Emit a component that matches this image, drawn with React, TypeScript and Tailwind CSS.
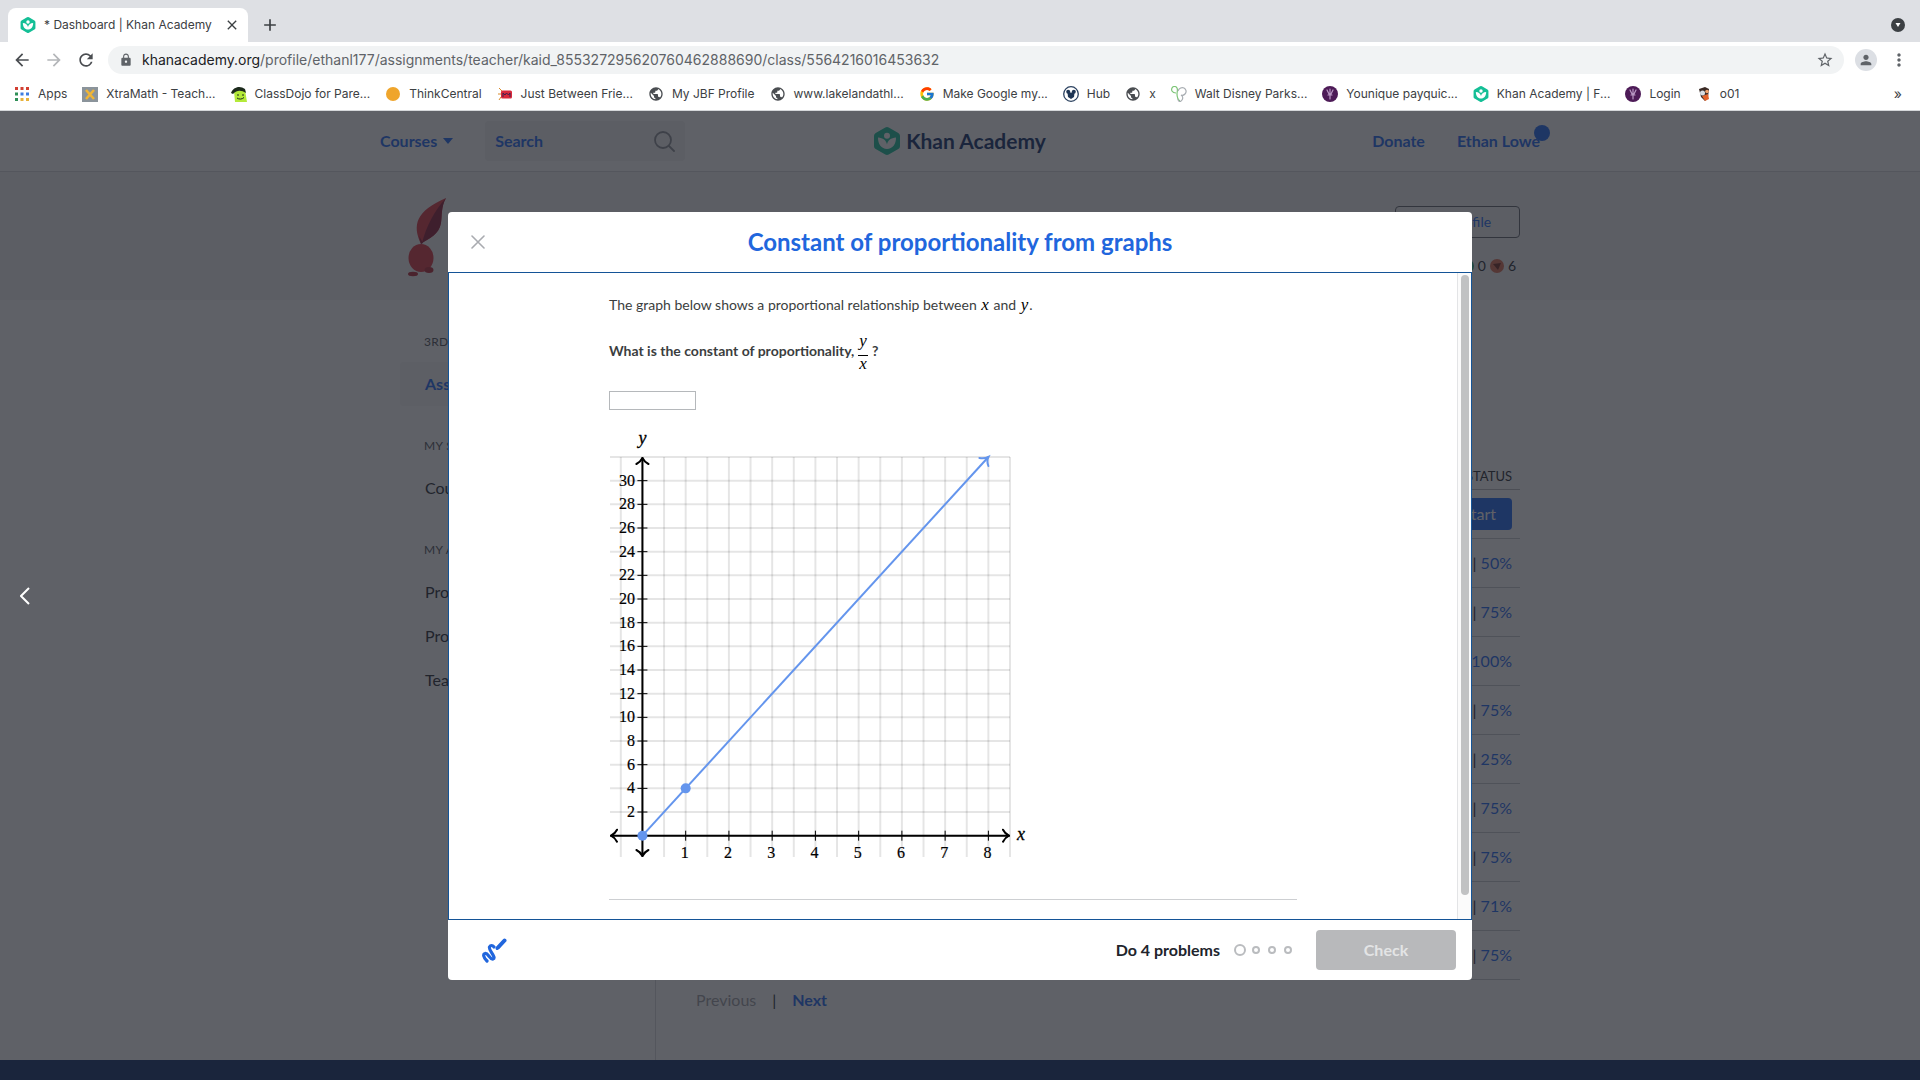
import type { ReactNode } from 'react';
import {
  MdAdd,
  MdArrowBack,
  MdArrowForward,
  MdClose,
  MdLock,
  MdMoreVert,
  MdPerson,
  MdPublic,
  MdRefresh,
  MdStarBorder,
} from 'react-icons/md';
import { FcGoogle } from 'react-icons/fc';

function KhanIcon({ className }: { className: string }) {
  return (
    <svg viewBox="0 0 26 28" className={className} aria-hidden="true">
      <path
        d="M11.3.5a3.4 3.4 0 0 1 3.4 0l9.6 5.5A3.4 3.4 0 0 1 26 9v10a3.4 3.4 0 0 1-1.700 3l-9.6 5.500a3.4 3.4 0 0 1-3.4 0L1.700 22A3.4 3.4 0 0 1 0 19V9a3.4 3.4 0 0 1 1.700-3z"
        fill="#14bf96"
      />
      <circle cx="13" cy="8.800" r="3" fill="#fff" />
      <path d="M4 10.500c5 .3 8.300 3 9 7 .7-4 4-6.700 9-7 .2 6.500-3.500 11.500-9 11.500s-9.200-5-9-11.500z" fill="#fff" />
    </svg>
  );
}

function AppsIcon() {
  const colors = ['#d23f31', '#d23f31', '#d23f31', '#2f8f57', '#3f7de0', '#3f7de0', '#2f8f57', '#e8b23a', '#e8b23a'];
  return (
    <svg viewBox="0 0 16 16" className="size-4">
      {colors.map((fill, i) => (
        <rect key={i} x={1 + (i % 3) * 5.5} y={1 + Math.floor(i / 3) * 5.5} width="3" height="3" fill={fill} />
      ))}
    </svg>
  );
}

function XtraMathIcon() {
  return (
    <svg viewBox="0 0 16 16" className="size-4">
      <rect y="1" width="16" height="15" fill="#8b949b" />
      <path d="M4 4l8 9M12 4l-8 9" stroke="#f0b535" strokeWidth="2.600" />
    </svg>
  );
}

function DojoIcon() {
  return (
    <svg viewBox="0 0 16 16" className="size-4">
      <path d="M3 5l11-1 2 12H4z" fill="#b4ea3a" />
      <path d="M0 7C2 1 9-1 14 3l1 4C10 4 6 4 2 8z" fill="#1c2a1c" />
      <path d="M6 9h2M11 9h2M6 12c2 1.500 5 1.500 7-.5" stroke="#1c2a1c" fill="none" />
    </svg>
  );
}

function DotIcon() {
  return (
    <svg viewBox="0 0 16 16" className="size-4">
      <circle cx="8" cy="8" r="7" fill="#efa52c" />
    </svg>
  );
}

function JbfIcon() {
  return (
    <svg viewBox="0 0 16 16" className="size-4">
      <path d="M2 2l3 3M1 8h3M2 14l2-3" stroke="#d98a2b" />
      <rect x="4" y="4.500" width="11" height="8" rx="1.500" fill="#d8293c" />
      <path d="M6 11V7l2 2 1.500-2 2 2 1.500-2v4" stroke="#3b2350" fill="none" />
    </svg>
  );
}

function GlobeIcon() {
  return (
    <span className="flex size-4 items-center justify-center">
      <MdPublic className="size-4 text-[#4a4d51]" />
    </span>
  );
}

function HubIcon() {
  return (
    <svg viewBox="0 0 16 16" className="size-4">
      <circle cx="8" cy="8" r="7.300" fill="#fff" stroke="#2c4260" strokeWidth="1.300" />
      <circle cx="5.200" cy="5.800" r="2" fill="#1e3554" />
      <circle cx="10.800" cy="5.800" r="2" fill="#1e3554" />
      <path d="M4.500 6.500h7L11 11l-3 2-3-2z" fill="#1e3554" />
    </svg>
  );
}

function DisneyIcon() {
  return (
    <svg viewBox="0 0 16 16" className="size-4" fill="none" strokeWidth="1.200">
      <path d="M5 7C1 7 0 4 1 2s4-2 5 0 0 4 0 6 0 5 3 7" stroke="#7cc576" />
      <path d="M7 5c1-3 4-4 6-3s3 4 1 6-4 1-4 1 3 2 1 5-4 1-4-1" stroke="#a8adb2" />
    </svg>
  );
}

function YouniqueIcon() {
  return (
    <svg viewBox="0 0 16 16" className="size-4">
      <circle cx="8" cy="8" r="8" fill="#4d1b57" />
      <path d="M5 4l2 4M8 3v5M11 4L9 8M6 9h4M8 9v4" stroke="#b998c4" strokeWidth="1.200" strokeLinecap="round" />
    </svg>
  );
}

function OwlIcon() {
  return (
    <svg viewBox="0 0 16 16" className="size-4">
      <path d="M3 3l6-2 4 2-1 8-3 4-4-4z" fill="#3a2a25" />
      <path d="M6 10l6-2 1 5-4 2z" fill="#e2622a" />
      <circle cx="6.500" cy="7" r="2.500" fill="#d7dde2" />
      <circle cx="11" cy="5.500" r="1.800" fill="#f0a26d" />
    </svg>
  );
}

const bookmarks: { label: string; icon: ReactNode }[] = [
  { label: 'Apps', icon: <AppsIcon /> },
  { label: 'XtraMath - Teach...', icon: <XtraMathIcon /> },
  { label: 'ClassDojo for Pare...', icon: <DojoIcon /> },
  { label: 'ThinkCentral', icon: <DotIcon /> },
  { label: 'Just Between Frie...', icon: <JbfIcon /> },
  { label: 'My JBF Profile', icon: <GlobeIcon /> },
  { label: 'www.lakelandathl...', icon: <GlobeIcon /> },
  { label: 'Make Google my...', icon: <FcGoogle className="size-4" /> },
  { label: 'Hub', icon: <HubIcon /> },
  { label: 'x', icon: <GlobeIcon /> },
  { label: 'Walt Disney Parks...', icon: <DisneyIcon /> },
  { label: 'Younique payquic...', icon: <YouniqueIcon /> },
  { label: 'Khan Academy | F...', icon: <KhanIcon className="size-4" /> },
  { label: 'Login', icon: <YouniqueIcon /> },
  { label: 'o01', icon: <OwlIcon /> },
];

function BrowserChrome() {
  return (
    <div className="border-b border-[#d5d7da] bg-white font-['Inter',sans-serif] text-[#3c4043]">
      <div className="flex h-[42px] items-end bg-[#dee0e4] pl-2 pr-[15px]">
        <div className="flex h-[34px] w-60 items-center rounded-t-lg bg-white pl-3 pr-2">
          <KhanIcon className="size-4" />
          <span className="ml-2 flex-1 whitespace-nowrap text-xs">* Dashboard | Khan Academy</span>
          <button aria-label="Close tab">
            <MdClose className="size-4" />
          </button>
        </div>
        <button aria-label="New tab" className="ml-3 flex h-[34px] items-center">
          <MdAdd className="size-5" />
        </button>
        <button aria-label="Search tabs" className="ml-auto flex h-[34px] items-center">
          <svg viewBox="0 0 14 14" className="size-3.5">
            <circle cx="7" cy="7" r="7" fill="#3c4043" />
            <path d="M4.500 5h5L7 9z" fill="#fff" />
          </svg>
        </button>
      </div>
      <div className="flex h-9 items-center pl-3 pr-[11px] text-[#5f6368]">
        <button aria-label="Back">
          <MdArrowBack className="size-5 text-[#4a4d51]" />
        </button>
        <button aria-label="Forward" className="ml-3">
          <MdArrowForward className="size-5 text-[#b4b6b9]" />
        </button>
        <button aria-label="Reload" className="ml-3">
          <MdRefresh className="size-5 text-[#4a4d51]" />
        </button>
        <div className="ml-3 flex h-7 flex-1 items-center rounded-full bg-[#f1f3f4] pl-[11px] pr-2.5">
          <MdLock className="size-3.5" />
          <p className="ml-[9px] flex-1 whitespace-nowrap text-sm">
            <span className="text-[#202124]">khanacademy.org</span>
            /profile/ethanl177/assignments/teacher/kaid_855327295620760462888690/class/5564216016453632
          </p>
          <button aria-label="Bookmark this page">
            <MdStarBorder className="size-[18px]" />
          </button>
        </div>
        <button aria-label="Account" className="ml-[11px] flex size-[22px] items-center justify-center rounded-full bg-[#dcdfe4]">
          <MdPerson className="size-4" />
        </button>
        <button aria-label="Menu" className="ml-3">
          <MdMoreVert className="size-5" />
        </button>
      </div>
      <nav className="flex h-8 items-center gap-[15px] pl-3.5 pr-[18px] text-xs">
        {bookmarks.map(({ label, icon }) => (
          <a key={label} href="#" className="flex shrink-0 items-center gap-2 whitespace-nowrap">
            {icon}
            {label}
          </a>
        ))}
        <span className="ml-auto text-sm">»</span>
      </nav>
    </div>
  );
}

function SiteHeader() {
  return (
    <header className="border-b border-[#d6d8da]">
      <div className="mx-auto grid h-[60px] max-w-[1160px] grid-cols-3 items-center font-bold text-[#1865f2]">
        <div className="flex items-center">
          <button className="flex items-center gap-1.5">
            Courses
            <svg viewBox="0 0 10 6" className="h-1.5 w-2.5">
              <path d="M0 0h10L5 6z" fill="currentColor" />
            </svg>
          </button>
          <div className="ml-8 flex h-10 w-[200px] items-center rounded bg-[#f3f3f3] px-2.5">
            <input
              type="search"
              aria-label="Search"
              placeholder="Search"
              className="min-w-0 flex-1 bg-transparent placeholder:text-[#1865f2]"
            />
            <svg viewBox="0 0 22 22" className="size-[22px]" fill="none" stroke="#8a8d93" strokeWidth="1.800">
              <circle cx="10" cy="10" r="8" />
              <path d="M16 16l5 5" strokeLinecap="round" />
            </svg>
          </div>
        </div>
        <a href="#" className="flex items-center justify-center gap-1.5 text-[21px] text-[#0a2a66]">
          <KhanIcon className="h-7 w-[26px]" />
          Khan Academy
        </a>
        <div className="flex items-center justify-end gap-8">
          <a href="#">Donate</a>
          <a href="#" className="relative">
            Ethan Lowe
            <span className="absolute -right-2.5 -top-1 size-4 rounded-full bg-[#1865f2]" />
          </a>
        </div>
      </div>
    </header>
  );
}

function ProfileBanner() {
  return (
    <section className="bg-[#f4f4f5]">
      <div className="mx-auto flex h-32 max-w-[1120px] justify-between">
        <svg viewBox="0 0 60 90" className="ml-1 mt-[19px] h-[90px] w-[60px]">
          <path d="M17 53C8 34 12 20 42 7c-5 9-4 17-5 25-2 12-12 15-20 21z" fill="#d92f3c" />
          <path d="M18 52C22 36 30 20 42 7c-5 9-4 17-5 25-2 12-12 15-19 20z" fill="#8a1430" />
          <ellipse cx="17" cy="67" rx="12.500" ry="14" fill="#d92f3c" />
          <path d="M17 53l-2-8 4 7z" fill="#8a1430" />
          <ellipse cx="9" cy="83" rx="5" ry="2.200" fill="#b5202f" />
          <ellipse cx="25" cy="79" rx="4.500" ry="3" fill="#b5202f" />
        </svg>
        <div className="flex flex-col items-end pt-[34px]">
          <button className="h-8 w-[125px] rounded border border-[#5d6068] text-sm text-[#1865f2]">Edit Profile</button>
          <div className="mt-[18px] flex items-center gap-1 pr-1 text-sm leading-5">
            <span className="size-3.5 rounded-full border-2 border-[#1fa37c]" />
            0
            <svg viewBox="0 0 14 14" className="size-3.5">
              <circle cx="7" cy="7" r="7" fill="#d9694e" />
              <path d="M3 5l8-1-3 7z" fill="#6d2118" />
            </svg>
            6
          </div>
        </div>
      </div>
    </section>
  );
}

function NavHeading({ children }: { children: string }) {
  return <h2 className="pl-6 text-xs leading-5 tracking-wide text-[#4b4e55]">{children}</h2>;
}

function NavItem({ children, active = false }: { children: string; active?: boolean }) {
  return (
    <a
      href="#"
      className={
        active
          ? 'flex h-11 items-center rounded bg-[#f6f6f6] pl-[25px] font-bold text-[#1865f2]'
          : 'flex h-11 items-center pl-[25px]'
      }
    >
      {children}
    </a>
  );
}

function Sidebar() {
  return (
    <nav className="w-64 shrink-0 border-r border-[#d6d8da] pt-8">
      <NavHeading>3RD</NavHeading>
      <div className="mb-[30px] mt-2.5">
        <NavItem active>Assignments</NavItem>
      </div>
      <NavHeading>MY STUFF</NavHeading>
      <div className="mb-[30px] mt-2.5">
        <NavItem>Courses</NavItem>
      </div>
      <NavHeading>MY ACCOUNT</NavHeading>
      <div className="mt-2.5">
        <NavItem>Progress</NavItem>
        <NavItem>Profile</NavItem>
        <NavItem>Teachers</NavItem>
      </div>
    </nav>
  );
}

const scores = ['50%', '75%', '100%', '75%', '25%', '75%', '75%', '71%', '75%'];

function Assignments() {
  return (
    <main className="flex-1 pl-10 pt-[161px]">
      <table className="w-full text-right">
        <thead>
          <tr className="h-7 border-b border-[#b9bbbf] text-[13px]">
            <th className="pr-2 pt-1 font-normal">STATUS</th>
          </tr>
        </thead>
        <tbody>
          <tr className="h-[49px] border-b border-[#c6c8cb]">
            <td className="pr-2">
              <button className="h-8 rounded bg-[#1865f2] px-4 text-white">Start</button>
            </td>
          </tr>
          {scores.map((score, i) => (
            <tr key={i} className="h-[49px] border-b border-[#c6c8cb]">
              <td className="pr-2">
                | <a href="#" className="text-[#1865f2]">{score}</a>
              </td>
            </tr>
          ))}
        </tbody>
      </table>
      <div className="mt-2 flex h-6 items-center gap-4 font-bold">
        <span className="font-normal text-[#9a9ca1]">Previous</span>
        <span className="font-normal">|</span>
        <a href="#" className="text-[#1865f2]">Next</a>
      </div>
    </main>
  );
}

// Plot area: x from -0.75 to 8.5, y from -1.8 to 32, on a 400px square.
const px = (x: number) => 1 + (x + 0.75) * (400 / 9.25);
const py = (y: number) => 32 + (32 - y) * (400 / 33.8);

function Graph() {
  const columns = Array.from({ length: 19 }, (_, i) => i * 0.5 - 0.5);
  const rows = Array.from({ length: 17 }, (_, i) => i * 2);
  return (
    <svg
      viewBox="0 0 424 440"
      className="mt-[15px] block h-[440px] w-[424px] font-['Liberation_Serif',serif]"
      role="img"
      aria-label="Line through (0, 0) and (1, 4)"
    >
      <g stroke="#000" strokeOpacity="0.1" strokeWidth="2">
        {columns.map((x) => (
          <line key={x} x1={px(x)} x2={px(x)} y1="32" y2="432" />
        ))}
        {rows.map((y) => (
          <line key={y} x1="1" x2="401" y1={py(y)} y2={py(y)} />
        ))}
      </g>
      <g stroke="#000" strokeWidth="2" fill="none" strokeLinecap="round" strokeLinejoin="round">
        <path d={`M2 ${py(0)}H400M${px(0)} 33V431`} />
        <path d={`M8 ${py(0) - 6}q-2 4-6 6 4 2 6 6M394 ${py(0) - 6}q2 4 6 6-4 2-6 6`} />
        <path d={`M${px(0) - 6} 39q4-2 6-6 2 4 6 6M${px(0) - 6} 425q4 2 6 6 2-4 6-6`} />
      </g>
      <g stroke="#000" strokeWidth="1">
        {rows.slice(1, 16).map((y) => (
          <line key={y} x1={px(0) - 5} x2={px(0) + 5} y1={py(y)} y2={py(y)} />
        ))}
        {[1, 2, 3, 4, 5, 6, 7, 8].map((x) => (
          <line key={x} x1={px(x)} x2={px(x)} y1={py(0) - 5} y2={py(0) + 5} />
        ))}
      </g>
      <g fontSize="16" stroke="#000" strokeWidth="0.2">
        {rows.slice(1, 16).map((y) => (
          <text key={y} x="26" y={py(y) + 5} textAnchor="end">{y}</text>
        ))}
        {[1, 2, 3, 4, 5, 6, 7, 8].map((x) => (
          <text key={x} x={px(x) - 1} y={py(0) + 22} textAnchor="middle">{x}</text>
        ))}
      </g>
      <g fontSize="18" fontStyle="italic" stroke="#000" strokeWidth="0.3">
        <text x={px(0)} y="19" textAnchor="middle">y</text>
        <text x="408" y={py(0) + 4}>x</text>
      </g>
      <g stroke="#6495ed" strokeWidth="2" fill="none">
        <path d={`M${px(0)} ${py(0)}L${px(8)} ${py(32)}`} />
        <path d={`M${px(8) - 9} ${py(32) + 1}q5 1 9-1-2 4 0 9`} strokeLinecap="round" />
      </g>
      <circle cx={px(0)} cy={py(0)} r="5" fill="#6495ed" />
      <circle cx={px(1)} cy={py(4)} r="5" fill="#6495ed" />
    </svg>
  );
}

function MathVar({ children }: { children: string }) {
  return <i className="mx-px font-['Liberation_Serif',serif] text-[17px] font-medium leading-4 text-black">{children}</i>;
}

function ExerciseDialog() {
  return (
    <div role="dialog" aria-labelledby="exercise-title" className="w-full max-w-[1024px] overflow-hidden rounded bg-white">
      <div className="grid h-[60px] grid-cols-[60px_1fr_60px] items-center">
        <button aria-label="Close" className="justify-self-center">
          <svg viewBox="0 0 14 14" className="size-3.5" stroke="#a9abb0" strokeWidth="1.600" strokeLinecap="round">
            <path d="M1 1l12 12M13 1L1 13" />
          </svg>
        </button>
        <h1 id="exercise-title" className="text-center text-2xl font-bold text-[#2166dd]">
          Constant of proportionality from graphs
        </h1>
      </div>

      <div className="flex border border-[#145497]">
        <div className="flex-1 pb-[19px] pl-40 pr-40 pt-[22px] text-sm leading-5 text-[#3b3e40]">
          <p>
            The graph below shows a proportional relationship between <MathVar>x</MathVar> and <MathVar>y</MathVar>.
          </p>
          <label htmlFor="answer" className="mt-4 flex h-10 items-center font-bold">
            What is the constant of proportionality,
            <span className="mx-1 inline-flex flex-col items-center font-normal">
              <span className="border-b border-black pb-1">
                <MathVar>y</MathVar>
              </span>
              <MathVar>x</MathVar>
            </span>
            ?
          </label>
          <input id="answer" type="text" className="mt-5 block h-[19px] w-[87px] border border-[#b5b8bb]" />
          <Graph />
          <hr className="mt-[34px] border-[#cdcfd2]" />
        </div>
        <div className="w-3.5 border-l border-[#e3e4e6] bg-[#fbfbfb] pb-6 pl-[3px] pr-0.5 pt-0.5">
          <div className="h-full rounded-full bg-[#c1c2c3]" />
        </div>
      </div>

      <div className="flex h-[60px] items-center pl-[34px] pr-4">
        <button aria-label="Show scratchpad">
          <svg viewBox="0 0 25 25" className="size-[25px]" fill="none" stroke="#2166dd" strokeLinecap="round" strokeLinejoin="round">
            <path d="M5 23C1 19 1 16 3 15.500c3-1 5 6.500 8 5.500 4-1.500-5-9-3.500-12C8.500 7 10.500 7 12 9" strokeWidth="3.200" />
            <path d="M16 9.500L22.500 2.500" strokeWidth="4" />
            <path d="M15 10.500l2-2" strokeWidth="3" />
          </svg>
        </button>
        <span className="ml-auto font-bold text-[#21242c]">Do 4 problems</span>
        <div className="ml-3.5 flex items-center">
          <span className="size-3 rounded-full border-2 border-[#babcbf]" />
          <span className="ml-1.5 flex gap-2">
            <span className="size-2 rounded-full border-2 border-[#babcbf]" />
            <span className="size-2 rounded-full border-2 border-[#babcbf]" />
            <span className="size-2 rounded-full border-2 border-[#babcbf]" />
          </span>
        </div>
        <button disabled className="ml-6 h-10 w-[140px] rounded bg-[#b8b9bb] font-bold text-[#e3e4e5]">
          Check
        </button>
      </div>
    </div>
  );
}

export default function App() {
  return (
    <div className="flex min-h-screen flex-col">
      <BrowserChrome />
      <div className="relative flex flex-1 flex-col bg-white font-['Lato',sans-serif] text-base text-[#21242c]">
        <SiteHeader />
        <ProfileBanner />
        <div className="mx-auto flex w-full max-w-[1120px] flex-1">
          <Sidebar />
          <Assignments />
        </div>
        <footer className="h-5 bg-[#0a2a66]" />

        <div className="absolute inset-0 flex items-start justify-center bg-[#21242c]/72 pt-[101px]">
          <button aria-label="Previous page" className="absolute left-5 top-1/2 -translate-y-1/2">
            <svg viewBox="0 0 10 18" className="h-[18px] w-2.5" fill="none" stroke="#fff" strokeWidth="2">
              <path d="M9 1L1 9l8 8" />
            </svg>
          </button>
          <ExerciseDialog />
        </div>
      </div>
    </div>
  );
}
